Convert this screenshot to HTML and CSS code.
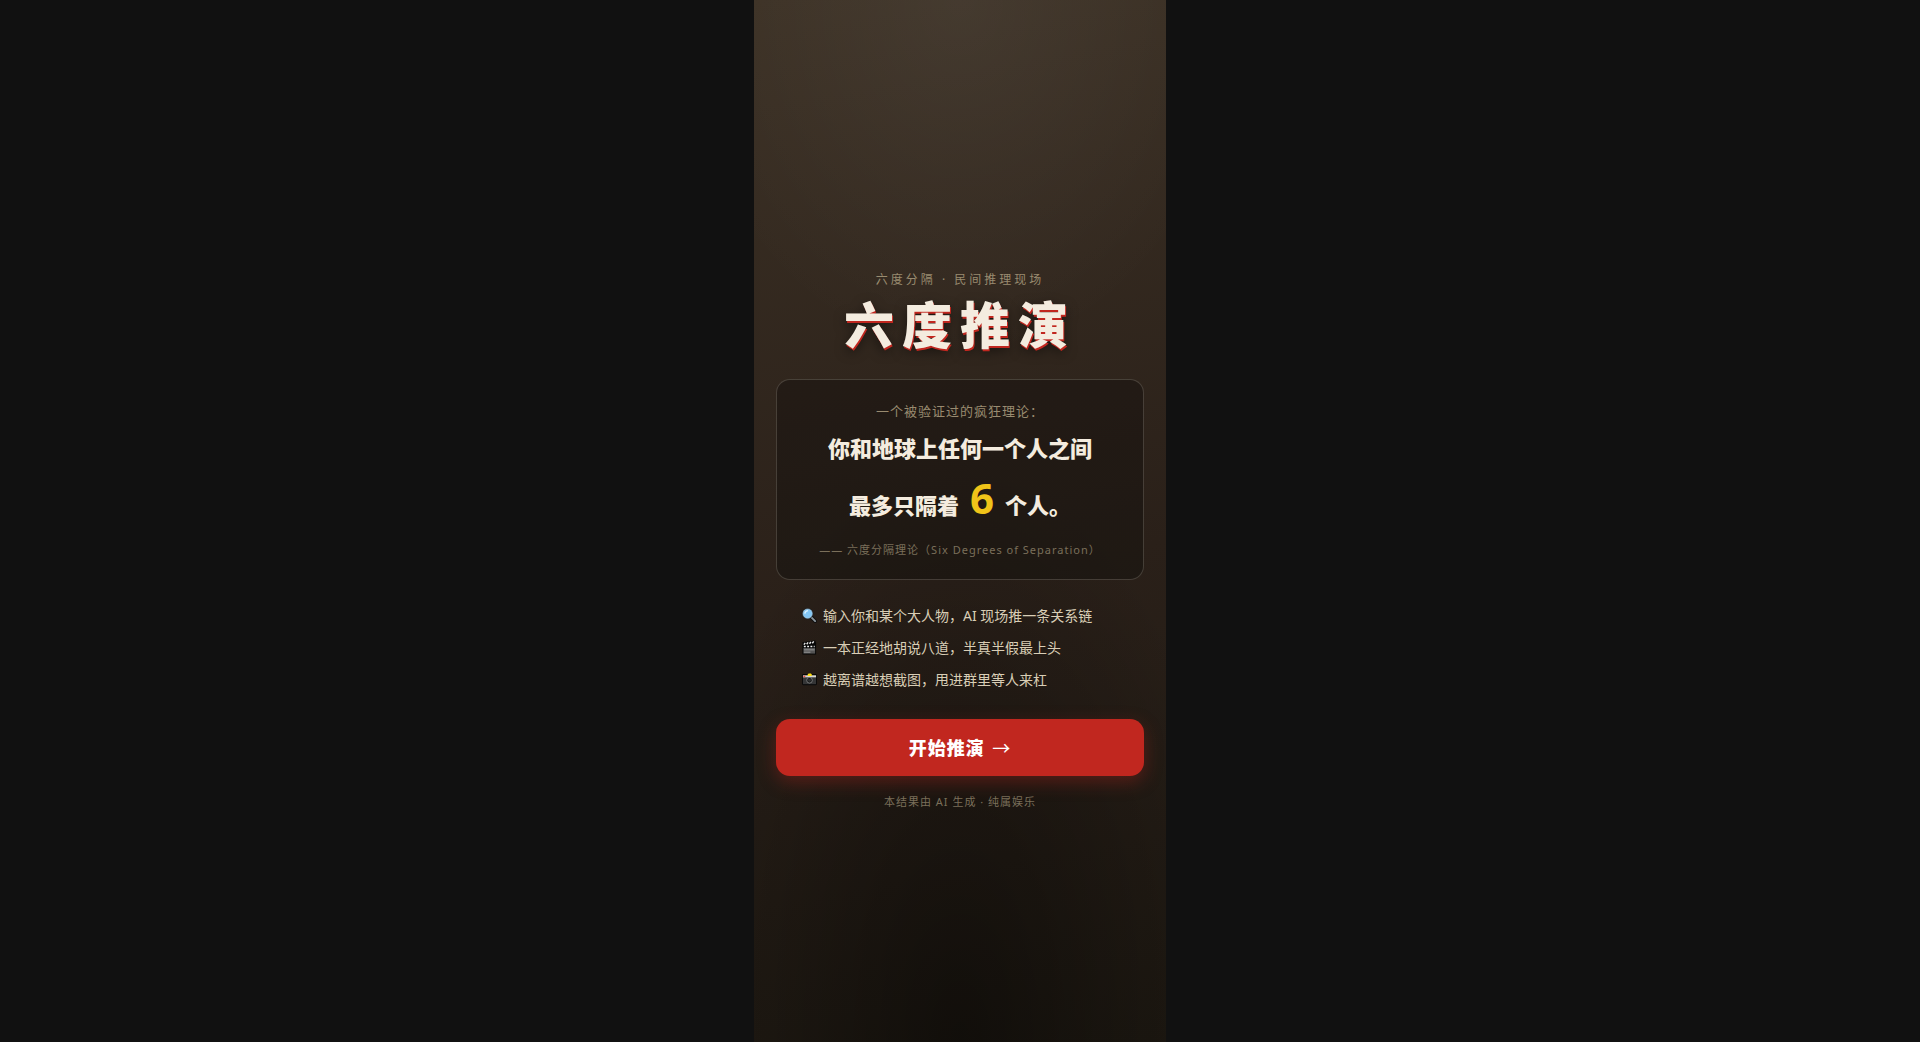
FILE: index.html
```html
<!DOCTYPE html>
<html lang="zh-CN">
<head>
<meta charset="utf-8">
<meta name="viewport" content="width=device-width, initial-scale=1">
<title>六度推演</title>
<link rel="stylesheet" href="styles.css">
</head>
<body>
<main class="stage">
  <header class="hero">
    <p class="kicker">六度分隔 · 民间推理现场</p>
    <h1 class="title">六度推演</h1>
  </header>
  <section class="theory">
    <p class="theory-lead">一个被验证过的疯狂理论：</p>
    <p class="theory-main">你和地球上任何一个人之间</p>
    <p class="theory-main theory-count">最多只隔着<strong class="six">6</strong>个人。</p>
    <p class="theory-source">—— 六度分隔理论（Six Degrees of Separation）</p>
  </section>
  <ul class="points">
    <li class="point">
      <svg class="icon" viewBox="0 0 16 16" aria-hidden="true">
        <path d="M9.500 9.500l4.500 4.500" stroke="#111" stroke-width="4" stroke-linecap="round"/>
        <path d="M9.500 9.500l4.500 4.500" stroke="#8b949b" stroke-width="2" stroke-linecap="round"/>
        <circle cx="6" cy="6" r="5.800" fill="#101c26"/>
        <circle cx="6" cy="6" r="5" fill="#83c7f5" stroke="#b8cbd6" stroke-width=".6"/>
        <path d="M3 6Q3.500 3 6.500 2.800" stroke="#d9f1ff" stroke-width="1.500" fill="none"/>
      </svg>
      <span>输入你和某个大人物，AI 现场推一条关系链</span>
    </li>
    <li class="point">
      <svg class="icon" viewBox="0 0 16 16" aria-hidden="true">
        <path d="M.5 2.500L14 .5l1 3V15.500H.5z" fill="#050505"/>
        <path d="M2 5l1.500-2M5 4.500l1.500-2M8 4l1.500-2M11 3.500l1.500-2" stroke="#e8e8e8" stroke-width="1.500"/>
        <path d="M2 7h2M5.500 7h2M9 7h2M12.500 7h1" stroke="#f1f1f1" stroke-width="1.500"/>
        <path d="M1.500 8.500h12.500v6H1.500z" fill="#555"/>
        <path d="M2 10.500h11.500M2 13h7" stroke="#aaa" stroke-width=".8"/>
      </svg>
      <span>一本正经地胡说八道，半真半假最上头</span>
    </li>
    <li class="point">
      <svg class="icon" viewBox="0 0 16 16" aria-hidden="true">
        <rect y="2" width="16" height="12" rx="1.500" fill="#080808"/>
        <path d="M1 3.500h14v2.500H1z" fill="#d5d5d2"/>
        <path d="M1 6h14v7H1z" fill="#343536"/>
        <path d="M5.500 3.500l1.500-2h2.500L11 3.500l-1.500 .8h-3z" fill="#ffdf12"/>
        <path d="M1.500 4h2v1.500h-2z" fill="#e8453c"/>
        <circle cx="8" cy="8.800" r="3" fill="#151515" stroke="#8b8d8e" stroke-width=".8"/>
        <circle cx="8" cy="8.800" r="1.500" fill="#303233"/>
      </svg>
      <span>越离谱越想截图，甩进群里等人来杠</span>
    </li>
  </ul>
  <button class="start" type="button">开始推演 <span class="arrow">→</span></button>
  <p class="note">本结果由 AI 生成 · 纯属娱乐</p>
</main>
</body>
</html>
```
FILE: styles.css
```css
* {
  box-sizing: border-box;
}

body {
  margin: 0;
  background: #111;
  color: #f4ecdf;
  font-family: "Noto Sans", "Noto Sans CJK SC", sans-serif;
}

p,
h1,
ul {
  margin: 0;
  padding: 0;
}

.stage {
  display: flex;
  flex-direction: column;
  justify-content: center;
  max-width: 412px;
  min-height: 100vh;
  margin: 0 auto;
  padding: 74px 22px 36px;
  background:
    radial-gradient(100% 50% at 50% 0%, rgba(255, 255, 255, 0.05), transparent 70%),
    radial-gradient(90% 70% at 50% 100%, rgba(0, 0, 0, 0.45), transparent 80%),
    linear-gradient(170deg, #3c3125 0%, #2a2019 55%, #1e1912 100%);
}

.hero {
  text-align: center;
}

.kicker {
  color: #998b70;
  font-size: 12px;
  line-height: 18px;
  letter-spacing: 3px;
}

.title {
  margin: 2px 0 26px;
  color: #f4ecdf;
  font-family: "STXingkai", "Xingkai SC", "Noto Sans CJK SC", sans-serif;
  font-size: 50px;
  font-weight: 900;
  line-height: 62px;
  letter-spacing: 8px;
  text-shadow: 1px 2px 0 #c1271f, 0 4px 12px rgba(0, 0, 0, 0.5);
}

.theory {
  padding: 20px 16px;
  border: 1px solid rgba(244, 236, 223, 0.18);
  border-radius: 14px;
  background: linear-gradient(180deg, rgba(22, 16, 14, 0.5), rgba(20, 18, 14, 0.5));
  text-align: center;
}

.theory-lead {
  color: #998b70;
  font-size: 13px;
  line-height: 22px;
  letter-spacing: 1px;
}

.theory-main {
  margin-top: 8px;
  font-size: 22px;
  font-weight: 900;
  line-height: 36px;
}

.theory-count {
  margin-top: 6px;
  line-height: 52px;
}

.six {
  margin: 0 11px;
  color: #f0c419;
  font-size: 42px;
  font-weight: 700;
  line-height: 52px;
}

.theory-source {
  margin-top: 10px;
  color: #7a6f5a;
  font-size: 11px;
  line-height: 18px;
  letter-spacing: 1px;
  white-space: nowrap;
}

.points {
  display: flex;
  flex-direction: column;
  gap: 8px;
  margin-top: 24px;
  padding: 0 26px;
  list-style: none;
}

.point {
  display: flex;
  align-items: center;
  gap: 6px;
  color: #d9ceb6;
  font-size: 14px;
  line-height: 24px;
}

.icon {
  flex: none;
  width: 15px;
  height: 15px;
}

.start {
  height: 57px;
  margin-top: 27px;
  border: 0;
  border-radius: 14px;
  background: #c1271f;
  box-shadow: 0 6px 18px rgba(193, 39, 31, 0.35);
  color: #fff;
  font-family: inherit;
  font-size: 18px;
  font-weight: 900;
  letter-spacing: 1px;
  cursor: pointer;
}

.arrow {
  margin-left: 2px;
  font-weight: 400;
}

.note {
  margin-top: 18px;
  color: #7a6f5a;
  font-size: 11px;
  line-height: 16px;
  letter-spacing: 1px;
  text-align: center;
}
```
